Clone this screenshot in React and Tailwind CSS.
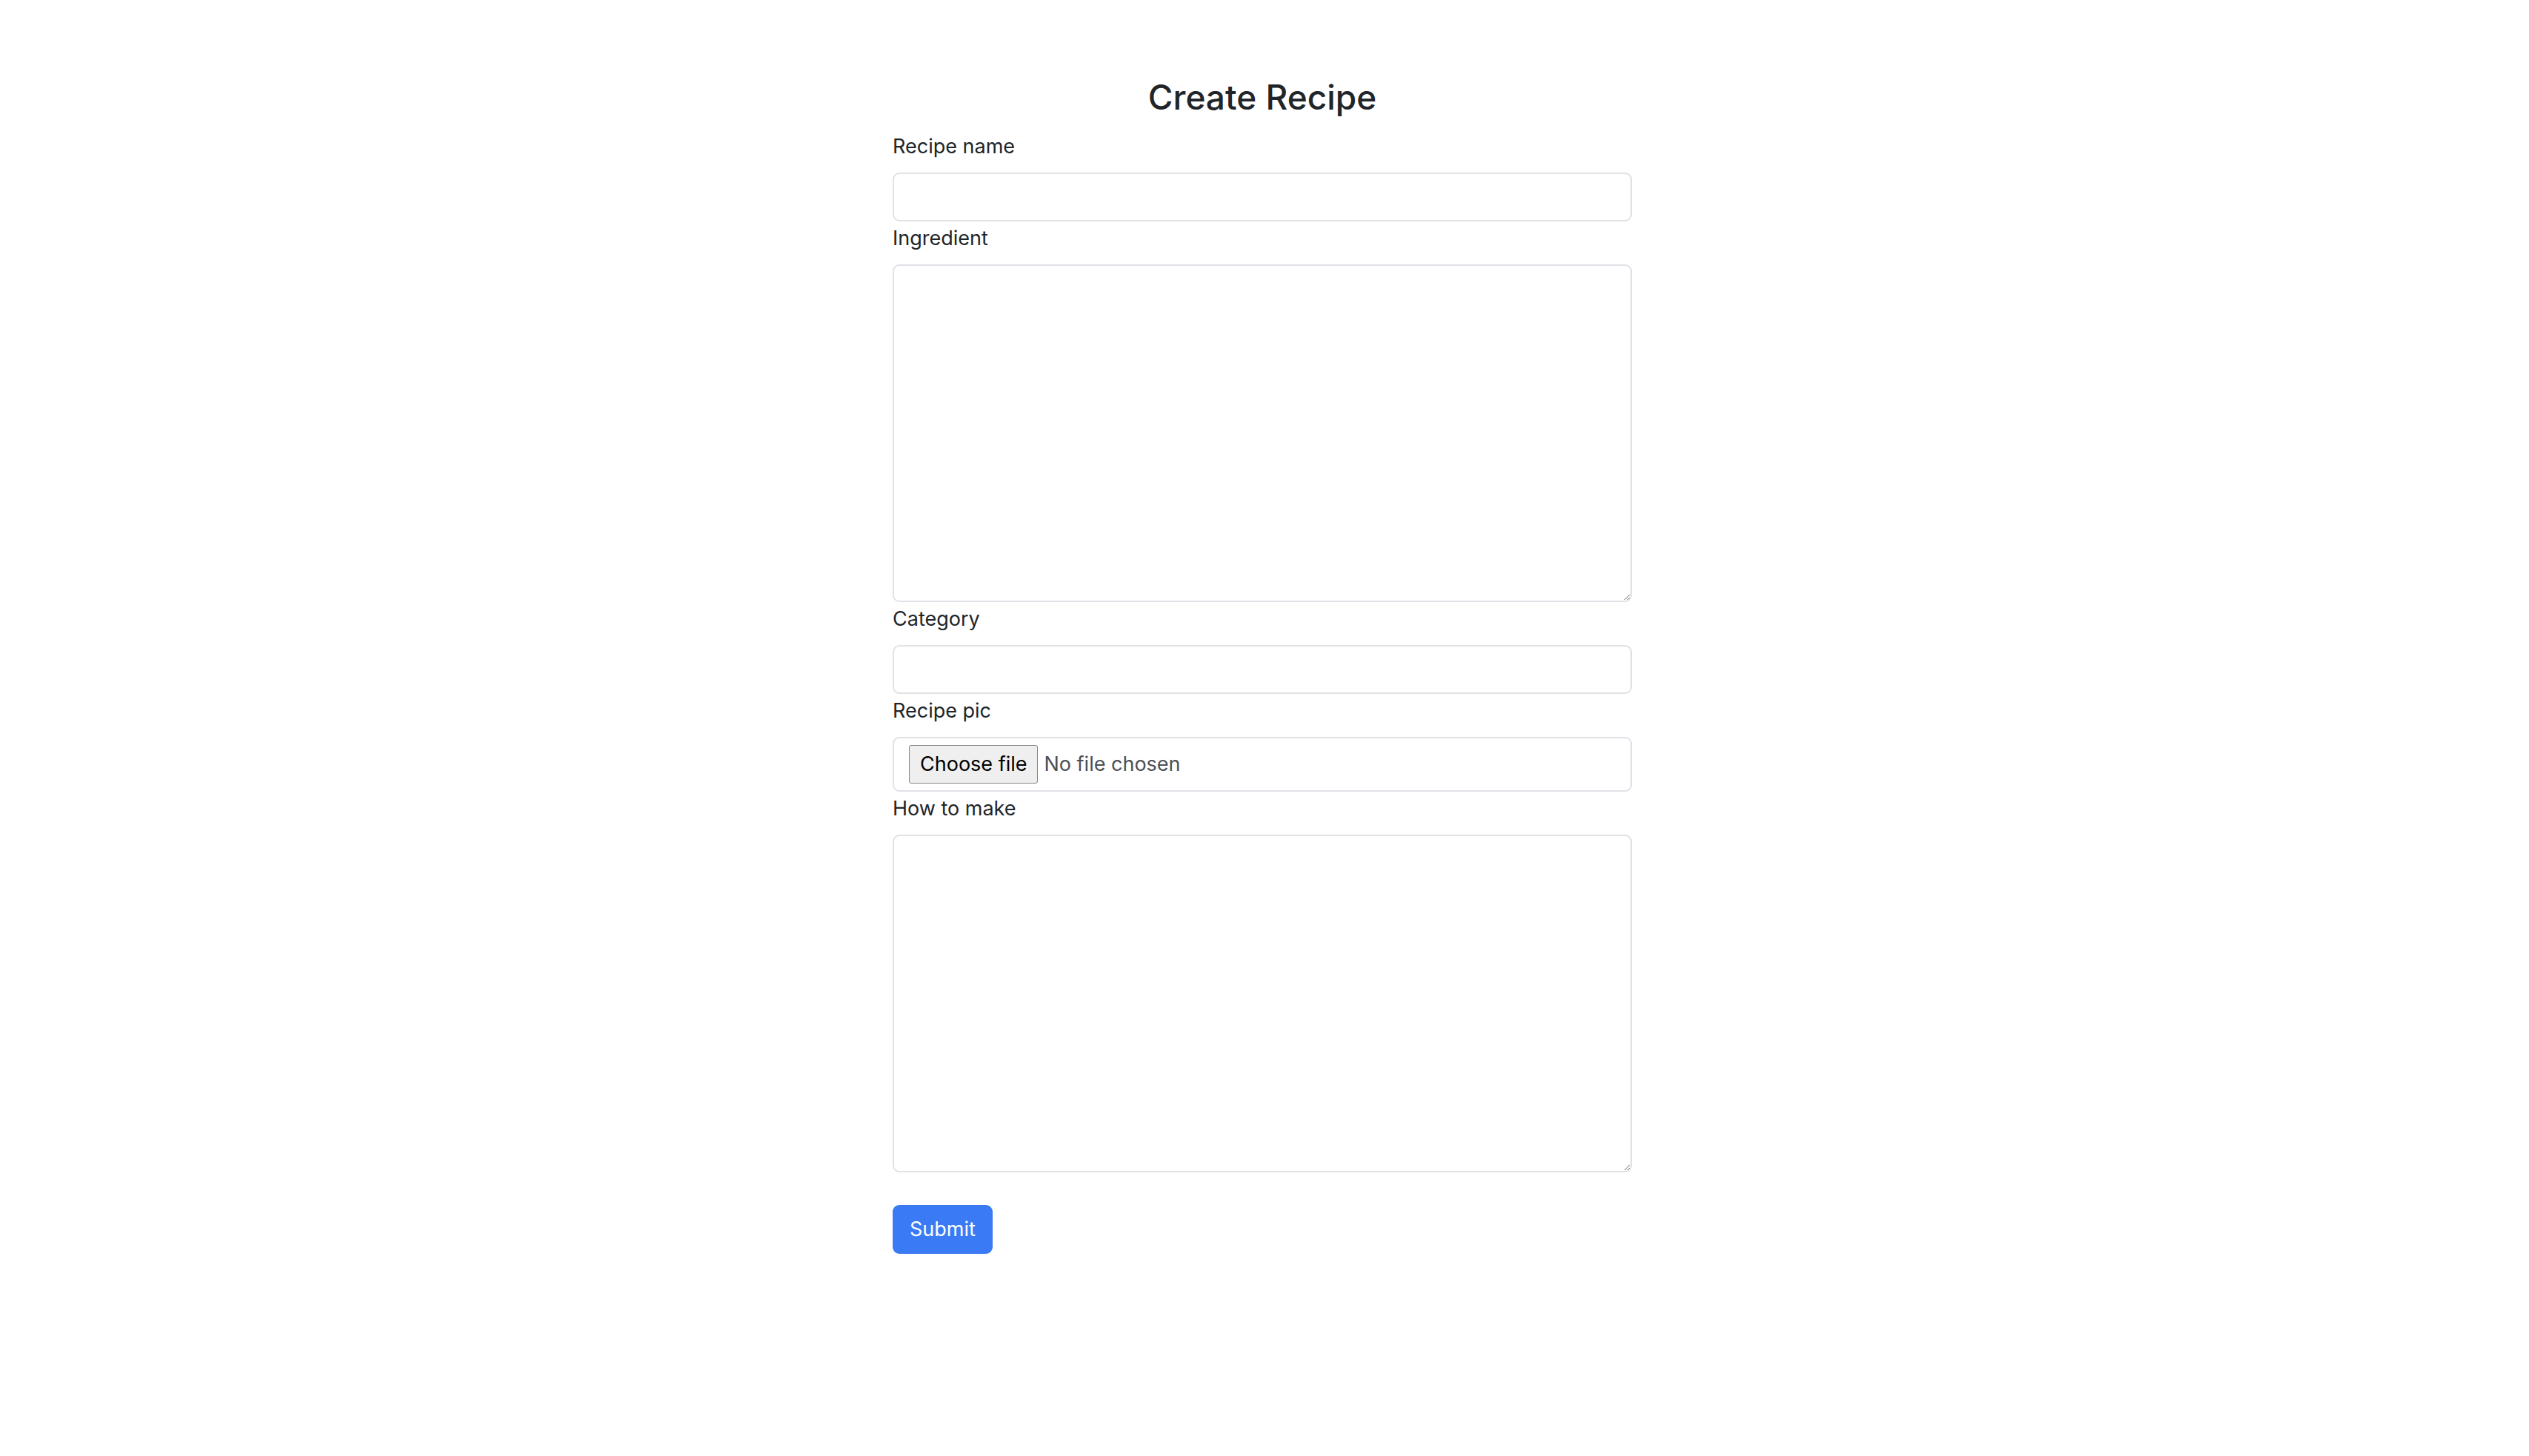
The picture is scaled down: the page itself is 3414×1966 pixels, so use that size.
import React from 'react';

const font = { fontFamily: 'Inter, "Noto Sans", "Liberation Sans", sans-serif' };

function Label({ children }) {
  return <label className="block text-[27px] leading-[42px] text-[#212529] mb-[14px]">{children}</label>;
}

export default function App() {
  return (
    <div className="min-h-screen bg-white flex justify-center pr-[6px]" style={font}>
      <form className="w-[998px] pt-[106px]" onSubmit={(e) => e.preventDefault()}>
        <h4 className="text-center text-[46px] leading-[50px] font-medium text-[#212529] mb-[21px]">Create Recipe</h4>

        {/* Recipe name */}
        <div className="mb-[2px]">
          <Label>Recipe name</Label>
          <input
            type="text"
            className="block w-full h-[66px] px-[21px] text-[27px] border-2 border-[#dfe2e6] rounded-[9px] outline-none"
          />
        </div>

        {/* Ingredient */}
        <div className="mb-[2px]">
          <Label>Ingredient</Label>
          <textarea className="block w-full h-[456px] px-[21px] py-[10px] text-[27px] border-2 border-[#dfe2e6] rounded-[9px] outline-none" />
        </div>

        {/* Category */}
        <div className="mb-[2px]">
          <Label>Category</Label>
          <input
            type="text"
            className="block w-full h-[66px] px-[21px] text-[27px] border-2 border-[#dfe2e6] rounded-[9px] outline-none"
          />
        </div>

        {/* Recipe pic */}
        <div className="mb-[2px]">
          <Label>Recipe pic</Label>
          <div className="flex items-center w-full h-[74px] pl-[20px] border-2 border-[#dfe2e6] rounded-[9px]">
            <span className="flex items-center h-[52px] px-[14px] bg-[#efefef] border border-[#858585] rounded-[3px] text-[27px] text-black">
              Choose file
            </span>
            <span className="ml-[8px] text-[27px] text-[#4b5056]">No file chosen</span>
          </div>
        </div>

        {/* How to make */}
        <div>
          <Label>How to make</Label>
          <textarea className="block w-full h-[456px] px-[21px] py-[10px] text-[27px] border-2 border-[#dfe2e6] rounded-[9px] outline-none" />
        </div>

        <button
          type="submit"
          className="mt-[44px] h-[66px] px-[23px] bg-[#3a7bf5] text-white text-[27px] rounded-[9px]"
        >
          Submit
        </button>
      </form>
    </div>
  );
}
